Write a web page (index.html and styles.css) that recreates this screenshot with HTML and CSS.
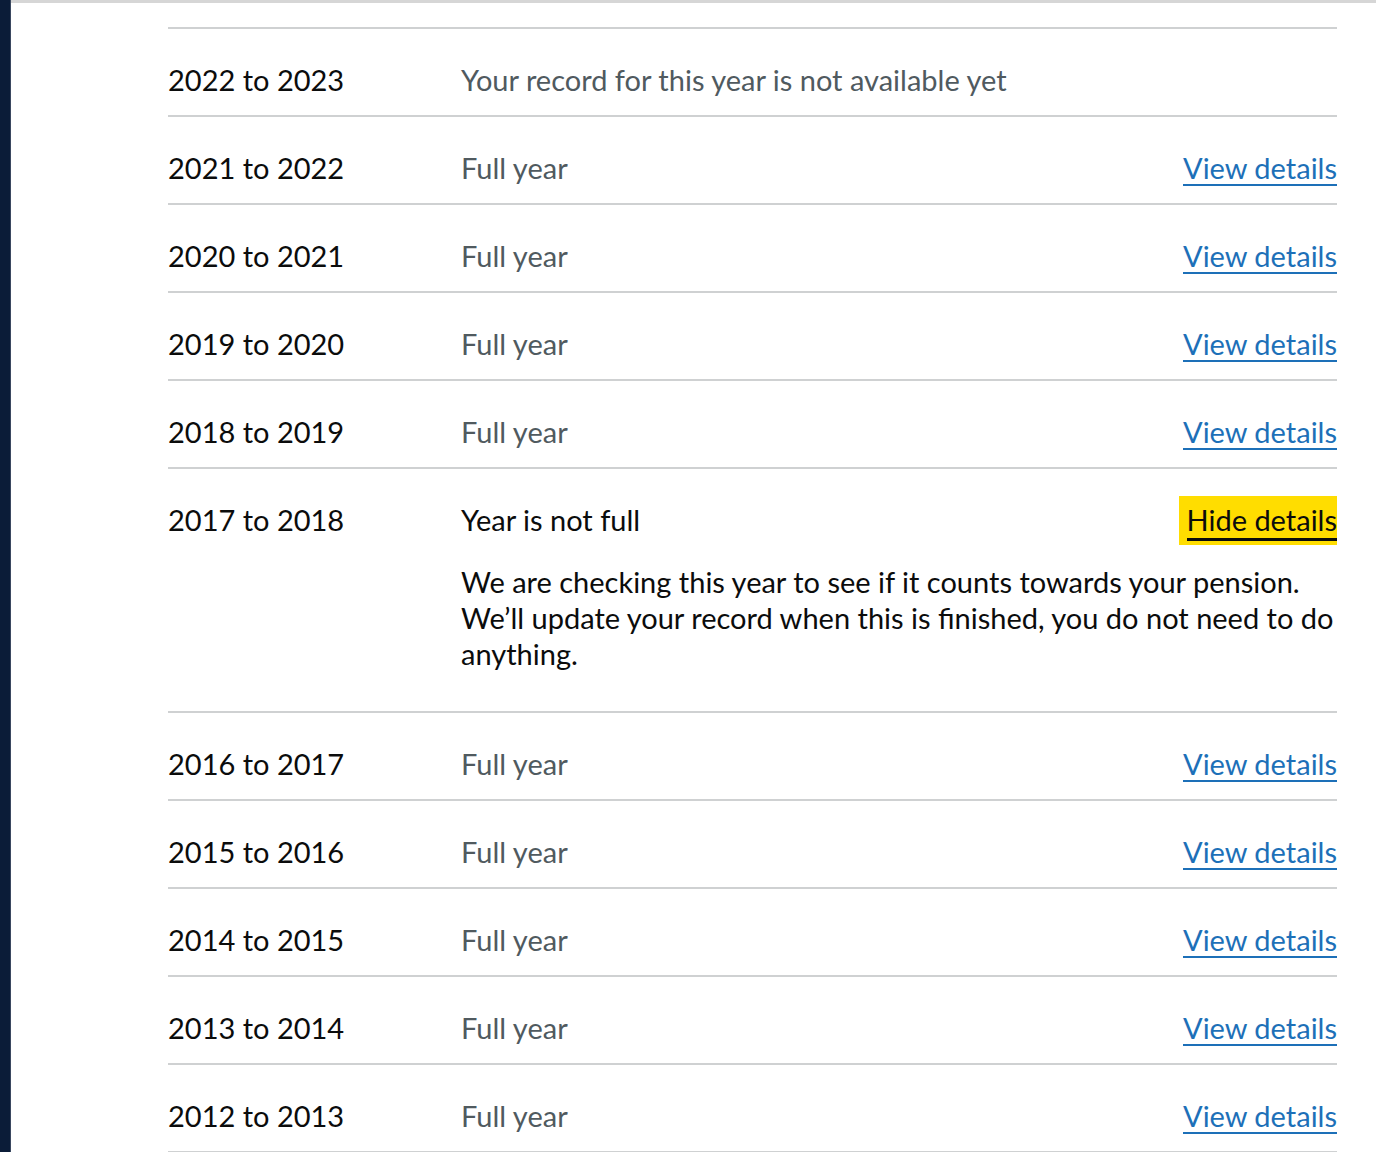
FILE: index.html
```html
<!DOCTYPE html>
<html lang="en">
<head>
<meta charset="utf-8">
<title>National Insurance record</title>
<link rel="stylesheet" href="styles.css">
</head>
<body>
<div class="page">
  <aside class="side"></aside>
  <main class="main">
    <div class="topline"></div>
    <dl class="list">
      <div class="row">
        <dt class="year">2022 to 2023</dt>
        <dd class="status">Your record for this year is not available yet</dd>
        <dd class="action"></dd>
      </div>
      <div class="row">
        <dt class="year">2021 to 2022</dt>
        <dd class="status">Full year</dd>
        <dd class="action"><a class="link" href="#">View details</a></dd>
      </div>
      <div class="row">
        <dt class="year">2020 to 2021</dt>
        <dd class="status">Full year</dd>
        <dd class="action"><a class="link" href="#">View details</a></dd>
      </div>
      <div class="row">
        <dt class="year">2019 to 2020</dt>
        <dd class="status">Full year</dd>
        <dd class="action"><a class="link" href="#">View details</a></dd>
      </div>
      <div class="row">
        <dt class="year">2018 to 2019</dt>
        <dd class="status">Full year</dd>
        <dd class="action"><a class="link" href="#">View details</a></dd>
      </div>
      <div class="row row-open">
        <dt class="year">2017 to 2018</dt>
        <dd class="status status-dark">Year is not full</dd>
        <dd class="action"><a class="link link-focus" href="#"><span class="focus-text">Hide details</span></a></dd>
        <dd class="details">We are checking this year to see if it counts towards your pension. We’ll update your record when this is finished, you do not need to do anything.</dd>
      </div>
      <div class="row">
        <dt class="year">2016 to 2017</dt>
        <dd class="status">Full year</dd>
        <dd class="action"><a class="link" href="#">View details</a></dd>
      </div>
      <div class="row">
        <dt class="year">2015 to 2016</dt>
        <dd class="status">Full year</dd>
        <dd class="action"><a class="link" href="#">View details</a></dd>
      </div>
      <div class="row">
        <dt class="year">2014 to 2015</dt>
        <dd class="status">Full year</dd>
        <dd class="action"><a class="link" href="#">View details</a></dd>
      </div>
      <div class="row">
        <dt class="year">2013 to 2014</dt>
        <dd class="status">Full year</dd>
        <dd class="action"><a class="link" href="#">View details</a></dd>
      </div>
      <div class="row">
        <dt class="year">2012 to 2013</dt>
        <dd class="status">Full year</dd>
        <dd class="action"><a class="link" href="#">View details</a></dd>
      </div>
    </dl>
  </main>
</div>
</body>
</html>
```

FILE: styles.css
```css
html, body {
  margin: 0;
  padding: 0;
  background: #ffffff;
}

body {
  font-family: "Lato", "Noto Sans", sans-serif;
  color: #0b0c0c;
  overflow: hidden;
}

.page {
  display: flex;
  min-height: 1152px;
}

.side {
  width: 10px;
  flex: none;
  background: #0b1c38;
  border-right: 1px solid #3a4860;
}

.main {
  flex: 1;
  display: flex;
  flex-direction: column;
}

.topline {
  height: 3px;
  background: #d6d6d6;
  margin-bottom: 24px;
}

.list {
  margin: 0 0 0 157px;
  width: 1169px;
  padding: 0;
  border-top: 2px solid #cfd1d2;
}

.row {
  display: grid;
  grid-template-columns: 293px 1fr auto;
  padding: 33px 0 17px;
  border-bottom: 2px solid #cfd1d2;
  font-size: 29px;
  line-height: 36px;
}

.row dt, .row dd {
  margin: 0;
}

.year {
  color: #0b0c0c;
}

.status {
  color: #505a5f;
}

.status-dark {
  color: #0b0c0c;
}

.action {
  text-align: right;
}

.link {
  color: #1d70b8;
  text-decoration: underline;
  text-decoration-thickness: 2px;
  text-underline-offset: 5px;
}

.link-focus {
  display: inline-block;
  background: #ffdd00;
  color: #0b0c0c;
  text-decoration: none;
  padding: 6px 0 4px 8px;
  margin: -6px 0 -10px;
}

.focus-text {
  display: inline-block;
  border-bottom: 3px solid #0b0c0c;
}

.row-open {
  padding-bottom: 39px;
}

.details {
  grid-column: 2 / 4;
  margin-top: 26px !important;
  color: #0b0c0c;
}
```
